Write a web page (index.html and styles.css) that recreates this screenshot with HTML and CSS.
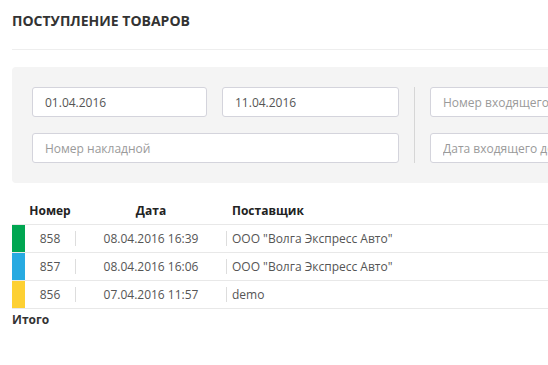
FILE: index.html
```
<!DOCTYPE html>
<html lang="ru">
<head>
  <meta charset="UTF-8">
  <meta name="viewport" content="width=device-width, initial-scale=1.0">
  <title>Поступление товаров</title>
  <link rel="stylesheet" href="styles.css">
</head>
<body>
  <div class="page">
    <div class="page-title">ПОСТУПЛЕНИЕ ТОВАРОВ</div>

    <div class="filters">
      <div class="filter-group">
        <input type="text" class="field" value="01.04.2016">
        <input type="text" class="field" value="11.04.2016">
        <input type="text" class="field wide" placeholder="Номер накладной">
      </div>
      <div class="divider"></div>
      <div class="filter-group right">
        <input type="text" class="field" placeholder="Номер входящего документа">
        <input type="text" class="field" placeholder="Дата входящего документа">
      </div>
    </div>

    <div class="list">
      <div class="row head">
        <div class="bar"></div>
        <div class="num">Номер</div>
        <div class="sep blank"></div>
        <div class="date">Дата</div>
        <div class="sep blank"></div>
        <div class="supplier">Поставщик</div>
      </div>
      <div class="row">
        <div class="bar green"></div>
        <div class="num">858</div>
        <div class="sep"></div>
        <div class="date">08.04.2016 16:39</div>
        <div class="sep"></div>
        <div class="supplier">ООО "Волга Экспресс Авто"</div>
      </div>
      <div class="row">
        <div class="bar blue"></div>
        <div class="num">857</div>
        <div class="sep"></div>
        <div class="date">08.04.2016 16:06</div>
        <div class="sep"></div>
        <div class="supplier">ООО "Волга Экспресс Авто"</div>
      </div>
      <div class="row">
        <div class="bar yellow"></div>
        <div class="num">856</div>
        <div class="sep"></div>
        <div class="date">07.04.2016 11:57</div>
        <div class="sep"></div>
        <div class="supplier">demo</div>
      </div>
    </div>

    <div class="total">Итого</div>
  </div>
</body>
</html>
```

FILE: styles.css
```
html, body {
  overflow: hidden;
}

body {
  margin: 0;
  font-family: 'Open Sans', Arial, sans-serif;
  color: #555;
  background-color: #fff;
}

.page {
  width: 900px;
  padding: 0 0 0 12px;
}

.page-title {
  font-size: 14px;
  font-weight: bold;
  line-height: 18px;
  color: #333;
  padding: 12px 0 19px;
  border-bottom: 1px solid #eee;
}

.filters {
  display: flex;
  margin-top: 17px;
  padding: 20px;
  background-color: #f4f4f4;
  border-radius: 4px;
}

.filter-group {
  display: grid;
  grid-template-columns: 175px 177px;
  gap: 16px 15px;
}

.filter-group.right {
  grid-template-columns: 200px;
}

.field {
  box-sizing: border-box;
  height: 30px;
  padding: 0 12px;
  border: 1px solid #d4d4dc;
  border-radius: 3px;
  background-color: #fff;
  font-family: 'Open Sans', Arial, sans-serif;
  font-size: 12px;
  color: #555;
  outline: none;
}

.field::placeholder {
  color: #9a9a9a;
}

.field.wide {
  grid-column: span 2;
}

.divider {
  width: 1px;
  margin: 0 15px 0 15px;
  background-color: #d6d6d6;
}

.list {
  font-size: 12px;
}

.row {
  display: flex;
  align-items: center;
  height: 27px;
  border-bottom: 1px solid #e8e8e8;
}

.row.head {
  height: 16px;
  padding: 19px 0 6px;
  font-weight: bold;
  color: #222;
}

.bar {
  width: 13px;
  align-self: stretch;
}

.green { background-color: #00a651; }
.blue { background-color: #27aae1; }
.yellow { background-color: #fdd033; }

.num {
  width: 50px;
  text-align: center;
}

.sep {
  width: 1px;
  height: 15px;
  background-color: #ddd;
}

.sep.blank {
  background-color: transparent;
}

.date {
  width: 150px;
  text-align: center;
}

.supplier {
  padding-left: 5px;
}

.total {
  margin-top: 3px;
  font-size: 12px;
  font-weight: bold;
  line-height: 16px;
  color: #333;
}
```
